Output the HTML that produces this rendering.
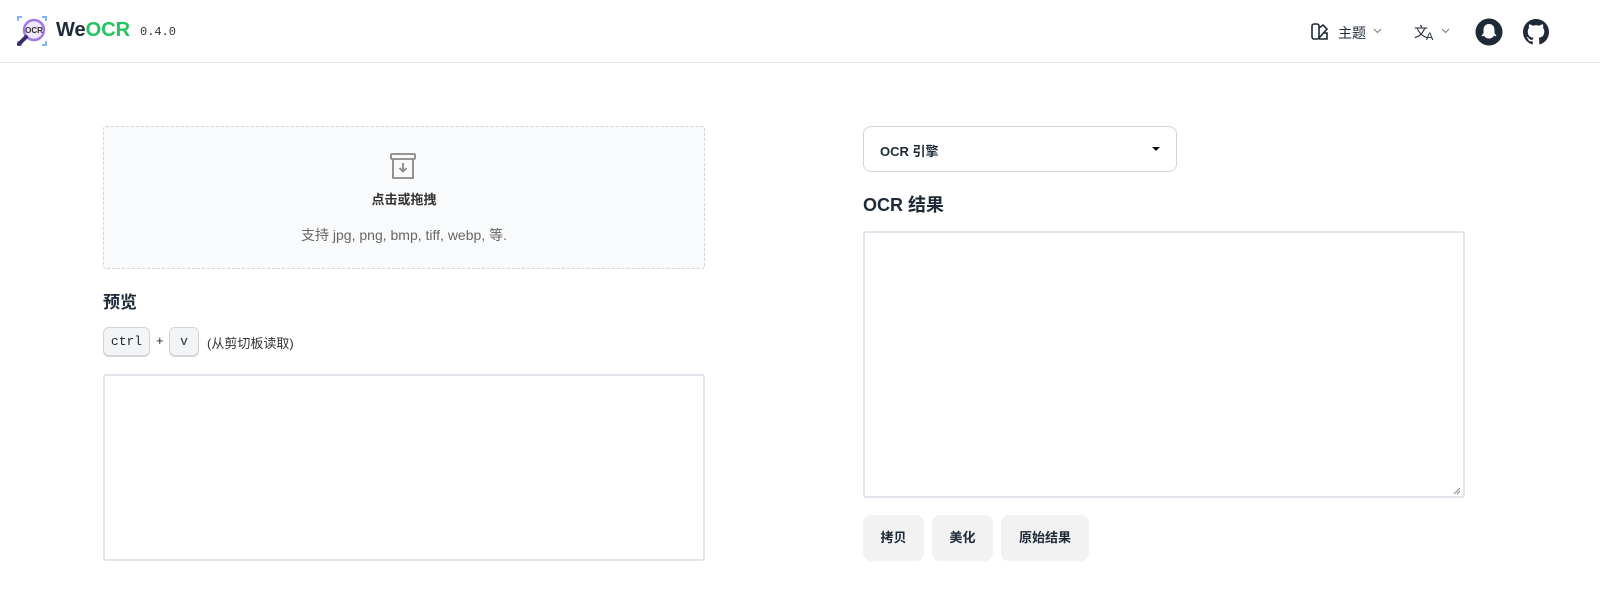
<!DOCTYPE html>
<html><head><meta charset="utf-8"><style>
*{box-sizing:border-box;margin:0;padding:0}
body{width:1600px;height:596px;background:#fff;font-family:"Liberation Sans","Noto Sans CJK SC",sans-serif;color:#1f2937;position:relative;overflow:hidden}
.hdr{position:absolute;left:0;top:0;width:1600px;height:63px;border-bottom:1px solid #e5e7eb}
.abs{position:absolute}
.mono{font-family:"Liberation Mono",monospace}
.kbd{position:absolute;height:29px;border:1px solid #d1d5db;border-radius:6px;background:#f3f4f6;font-family:"Liberation Mono",monospace;font-size:13px;text-align:center;line-height:27px;box-shadow:0 1px 0 #d1d5db}
.btn{position:absolute;top:515px;height:46px;background:#f2f2f2;border-radius:8px;font-size:13px;font-weight:bold;text-align:center;line-height:46px;color:#1f2937}
</style></head><body>
<div class="hdr">
 <svg class="abs" style="left:15px;top:14px" width="34" height="34" viewBox="0 0 34 34">
  <path d="M3 7V3h4M27 3h4v4M3 27v4h4M31 27v4h-4" stroke="#7db8f5" stroke-width="2" fill="none"/>
  <circle cx="19" cy="16" r="10" fill="#efe6fb" stroke="#a27be0" stroke-width="2.5"/>
  <text x="19" y="19" font-size="8" font-family="Liberation Sans" text-anchor="middle" fill="#333" font-weight="bold">OCR</text>
  <path d="M11 23L4 30" stroke="#3b2a6b" stroke-width="4" stroke-linecap="round"/>
 </svg>
 <div class="abs" style="left:56px;top:19px;font-size:20px;font-weight:bold;color:#1f2937">We<span style="color:#22c55e">OCR</span></div>
 <div class="abs mono" style="left:140px;top:25px;font-size:12px;color:#333">0.4.0</div>
 <svg class="abs" style="left:1310px;top:22px" width="20" height="20" viewBox="0 0 20 20" fill="none" stroke="#1f2937" stroke-width="1.6"><rect x="2" y="2" width="7" height="15" rx="2"/><path d="M9 6l4-3 4 4-8 9M9 17h8v-6h-3"/></svg>
 <div class="abs" style="left:1338px;top:23px;font-size:14px">主题</div>
 <svg class="abs" style="left:1373px;top:28px" width="9" height="6"><path d="M1 1l3.5 3.5L8 1" stroke="#777" fill="none"/></svg>
 <div class="abs" style="left:1414px;top:22px;font-size:14px">文<span style="font-size:11px;position:relative;top:3px;margin-left:-2px">A</span></div>
 <svg class="abs" style="left:1441px;top:28px" width="9" height="6"><path d="M1 1l3.5 3.5L8 1" stroke="#777" fill="none"/></svg>
 <svg class="abs" style="left:1475px;top:18px" width="28" height="28" viewBox="0 0 28 28"><circle cx="14" cy="14" r="13.5" fill="#1f2937"/><path d="M14 6c-4 0-5.5 3-5.5 6v3l-2 3c1 .5 2 0 2.5-.5 1 2 3 3 5 3s4-1 5-3c.5.5 1.5 1 2.5.5l-2-3v-3c0-3-1.5-6-5.5-6z" fill="#fff"/></svg>
 <svg class="abs" style="left:1523px;top:19px" width="26" height="26" viewBox="0 0 16 16"><path fill="#1f2937" d="M8 0C3.58 0 0 3.58 0 8c0 3.540 2.29 6.53 5.47 7.59.4.07.55-.17.55-.38 0-.19-.01-.82-.01-1.49-2.01.37-2.53-.49-2.690-.94-.09-.23-.48-.94-.82-1.13-.28-.15-.68-.52-.01-.53.63-.01 1.08.58 1.23.82.72 1.21 1.87.87 2.33.66.07-.52.28-.87.51-1.07-1.78-.2-3.64-.89-3.64-3.95 0-.87.31-1.59.82-2.15-.08-.2-.36-1.02.08-2.12 0 0 .67-.21 2.2.82.64-.18 1.32-.27 2-.27.68 0 1.36.09 2 .27 1.53-1.04 2.2-.82 2.2-.82.44 1.1.16 1.92.08 2.12.51.56.82 1.27.82 2.15 0 3.07-1.87 3.75-3.65 3.95.29.25.54.73.54 1.48 0 1.07-.01 1.93-.01 2.2 0 .21.15.46.55.38A8.013 8.013 0 0016 8c0-4.42-3.58-8-8-8z"/></svg>
</div>

<div class="abs" style="left:103px;top:126px;width:602px;height:143px;background:#f9fafb;border:1px dashed #d1d5db;border-radius:3px"></div>
<svg class="abs" style="left:389px;top:152px" width="28" height="28" viewBox="0 0 28 28" fill="none" stroke="#888" stroke-width="1.8"><rect x="2" y="2" width="24" height="5" rx="1"/><path d="M4 7v19h20V7M14 11v8M10.5 16l3.5 3.5 3.5-3.5"/></svg>
<div class="abs" style="left:103px;top:189px;width:602px;text-align:center;font-size:13px;font-weight:bold;color:#333">点击或拖拽</div>
<div class="abs" style="left:103px;top:225px;width:602px;text-align:center;font-size:14px;color:#666">支持 jpg, png, bmp, tiff, webp, 等.</div>

<div class="abs" style="left:103px;top:288px;font-size:17px;font-weight:bold">预览</div>
<div class="kbd" style="left:103px;top:327px;width:47px">ctrl</div>
<div class="abs" style="left:156px;top:333px;font-size:13px">+</div>
<div class="kbd" style="left:169px;top:327px;width:30px">v</div>
<div class="abs" style="left:207px;top:333px;font-size:13px;color:#333">(从剪切板读取)</div>
<div class="abs" style="left:103px;top:374px;width:602px;height:187px;border:2px solid #e2e4ec;border-radius:3px"></div>

<div class="abs" style="left:863px;top:126px;width:314px;height:46px;border:1px solid #d1d5db;border-radius:8px"></div>
<div class="abs" style="left:880px;top:141px;font-size:13px;font-weight:bold">OCR 引擎</div>
<svg class="abs" style="left:1152px;top:147px" width="8" height="5"><path d="M0 0h8L4 4z" fill="#111"/></svg>
<div class="abs" style="left:863px;top:191px;font-size:18px;font-weight:bold">OCR 结果</div>
<div class="abs" style="left:863px;top:231px;width:602px;height:267px;border:2px solid #e2e4ec;border-radius:3px"></div>
<svg class="abs" style="left:1453px;top:487px" width="8" height="8"><path d="M7 1L1 7M7 4L4 7" stroke="#888"/></svg>
<div class="btn" style="left:863px;width:61px">拷贝</div>
<div class="btn" style="left:932px;width:61px">美化</div>
<div class="btn" style="left:1001px;width:88px">原始结果</div>
</body></html>
